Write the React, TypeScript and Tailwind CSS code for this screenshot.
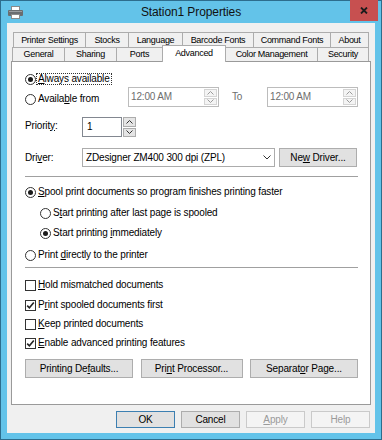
import React from "react";

const Up = ({ c = "#333" }: { c?: string }) => (
  <svg width="7" height="4" viewBox="0 0 7 4">
    <path d="M0.5 3.5 L3.5 0.5 L6.5 3.5" stroke={c} fill="none" />
  </svg>
);

const Down = ({ c = "#333" }: { c?: string }) => (
  <svg width="7" height="4" viewBox="0 0 7 4">
    <path d="M0.5 0.5 L3.5 3.5 L6.5 0.5" stroke={c} fill="none" />
  </svg>
);

function Radio({ checked }: { checked?: boolean }) {
  return (
    <span className="w-[11px] h-[11px] rounded-full border border-[#333] bg-white flex items-center justify-center shrink-0">
      {checked && <span className="w-[5px] h-[5px] rounded-full bg-[#1a1a1a]" />}
    </span>
  );
}

function Check({ checked }: { checked?: boolean }) {
  return (
    <span className="w-[11px] h-[11px] border border-[#333] bg-white flex items-center justify-center shrink-0">
      {checked && (
        <svg width="9" height="9" viewBox="0 0 9 9">
          <path d="M1.2 4.6 L3.4 6.8 L7.8 1.6" stroke="#222" strokeWidth="1.6" fill="none" />
        </svg>
      )}
    </span>
  );
}

// underlined access key
const K = ({ children }: { children: React.ReactNode }) => (
  <span className="underline underline-offset-1">{children}</span>
);

function Spinner({ disabled }: { disabled?: boolean }) {
  const half = disabled
    ? "flex-1 flex items-center justify-center border border-[#d4d4d4] bg-[#f4f4f4]"
    : "flex-1 flex items-center justify-center border border-[#acacac] bg-[#e5e5e5]";
  const c = disabled ? "#9a9a9a" : "#333";
  return (
    <div className="w-[13px] h-full flex flex-col gap-px">
      <div className={half}>
        <Up c={c} />
      </div>
      <div className={half}>
        <Down c={c} />
      </div>
    </div>
  );
}

function TimeBox() {
  return (
    <div className="w-[91px] h-[20px] border border-[#bcbcbc] bg-white flex items-center pl-[2px] p-px">
      <span className="flex-1 text-[#6d6d6d]">12:00 AM</span>
      <Spinner disabled />
    </div>
  );
}

function Btn({ children, w, def, disabled }: { children: React.ReactNode; w: string; def?: boolean; disabled?: boolean }) {
  let cls = "border-[#adadad] bg-[#e1e1e1] text-black";
  if (def) cls = "border-[#3c7fb1] bg-[#e1e1e1] text-black";
  if (disabled) cls = "border-[#cacaca] bg-[#f4f4f4] text-[#9a9a9a]";
  return <div className={`${w} h-full border flex items-center justify-center ${cls}`}>{children}</div>;
}

const row1 = [
  ["Printer Settings", 72],
  ["Stocks", 43],
  ["Language", 54],
  ["Barcode Fonts", 71],
  ["Command Fonts", 77],
  ["About", 39],
] as const;

export default function App() {
  return (
    <div className="w-[382px] h-[440px] bg-[#63c3e9] border border-[#2d6d8d] flex flex-col font-['Liberation_Sans',Arial,sans-serif] text-[10px] tracking-[-0.15px] text-black leading-none">
      {/* title bar */}
      <div className="h-[22px] shrink-0 grid grid-cols-[1fr_auto_1fr] items-center">
        <div className="pl-[7px] flex items-center">
          <svg width="15" height="13" viewBox="0 0 15 13">
            <rect x="3.5" y="0.5" width="8" height="4" fill="#fff" stroke="#8a8a8a" />
            <rect x="0" y="4" width="15" height="6" rx="1" fill="#6a6d70" />
            <rect x="1" y="5" width="13" height="1" fill="#9a9da0" />
            <rect x="3.5" y="8.5" width="8" height="4" fill="#fff" stroke="#8a8a8a" />
          </svg>
        </div>
        <div className="text-[12px] tracking-[-0.1px] text-[#111]">Station1 Properties</div>
        <div className="justify-self-end self-start -mt-px mr-[3px] w-[28px] h-[21px] bg-[#c75050] flex items-center justify-center">
          <svg width="8" height="7" viewBox="0 0 8 7">
            <path d="M1 0.5 L7 6.5 M7 0.5 L1 6.5" stroke="#1c1c1c" strokeWidth="1.8" />
          </svg>
        </div>
      </div>

      {/* client */}
      <div className="flex-1 mx-[6px] mb-[6px] bg-[#f0f0f0] pl-[4px] pt-[9px] flex flex-col">
        {/* tabs */}
        <div className="flex ml-[2px] h-[15px] text-[9px] tracking-[-0.3px]">
          {row1.map(([t, w], i) => (
            <div
              key={t}
              style={{ width: w }}
              className={`h-full border-t border-l border-[#acacac] bg-[#f0f0f0] flex items-center justify-center ${i === row1.length - 1 ? "border-r" : ""}`}
            >
              {t}
            </div>
          ))}
        </div>
        <div className="flex ml-[1px] h-[14px] items-end text-[9px] tracking-[-0.3px]">
          <div className="w-[52px] h-full border-t border-l border-[#acacac] flex items-center justify-center">General</div>
          <div className="w-[52px] h-full border-t border-l border-[#acacac] flex items-center justify-center">Sharing</div>
          <div className="w-[46px] h-full border-t border-l border-[#acacac] flex items-center justify-center">Ports</div>
          <div className="relative z-10 w-[64px] h-[17px] -mb-px border-t border-x border-[#acacac] bg-white flex justify-center pt-[3px]">
            Advanced
          </div>
          <div className="w-[91px] h-full border-t border-[#acacac] flex items-center justify-center">Color Management</div>
          <div className="w-[52px] h-full border-t border-x border-[#acacac] flex items-center justify-center">Security</div>
        </div>

        {/* panel */}
        <div className="w-[360px] h-[344px] shrink-0 border border-[#9a9a9a] bg-white pl-[13px] pr-[12px] pt-[9px] flex flex-col">
          <div className="h-[16px] flex items-center">
            <Radio checked />
            <span className="border border-dotted border-[#333] px-px h-[12px] flex items-center">
              <K>A</K>lways available
            </span>
          </div>

          <div className="h-[20px] flex items-center">
            <div className="w-[103px] mt-[4px] flex items-center gap-[2px]">
              <Radio />
              <span>
                Availa<K>b</K>le from
              </span>
            </div>
            <TimeBox />
            <span className="w-[48px] pl-[13px] text-[#6d6d6d]">To</span>
            <TimeBox />
          </div>

          <div className="h-[20px] mt-[10px] flex items-center">
            <span className="w-[57px] mt-[-3px]">
              Priorit<K>y</K>:
            </span>
            <div className="w-[40px] h-full border border-[#828790] bg-white flex items-center pl-[4px]">1</div>
            <div className="h-full ml-px">
              <Spinner />
            </div>
          </div>

          <div className="h-[19px] mt-[11px] flex items-center">
            <span className="w-[57px]">
              Dri<K>v</K>er:
            </span>
            <div className="w-[193px] h-full border border-[#acacac] bg-white flex items-center justify-between pl-[3px] pr-[3px]">
              <span>ZDesigner ZM400 300 dpi (ZPL)</span>
              <svg width="8" height="5" viewBox="0 0 8 5">
                <path d="M0.5 0.5 L4 4 L7.5 0.5" stroke="#333" fill="none" />
              </svg>
            </div>
            <div className="ml-[4px] h-full flex">
              <Btn w="w-[78px]">
                Ne<K>w</K>&nbsp;Driver...
              </Btn>
            </div>
          </div>

          <div className="h-px mt-[9px] bg-[#a0a0a0]" />

          <div className="h-[16px] mt-[7px] flex items-center gap-[2px]">
            <Radio checked />
            <span>
              <K>S</K>pool print documents so program finishes printing faster
            </span>
          </div>
          <div className="h-[16px] mt-[5px] pl-[15px] flex items-center gap-[2px]">
            <Radio />
            <span>
              S<K>t</K>art printing after last page is spooled
            </span>
          </div>
          <div className="h-[16px] mt-[4px] pl-[15px] flex items-center gap-[2px]">
            <Radio checked />
            <span>
              Start printing <K>i</K>mmediately
            </span>
          </div>
          <div className="h-[16px] mt-[6px] flex items-center gap-[2px]">
            <Radio />
            <span>
              Print <K>d</K>irectly to the printer
            </span>
          </div>

          <div className="h-px mt-[4px] bg-[#a0a0a0]" />

          <div className="h-[16px] mt-[9px] flex items-center gap-[2px]">
            <Check />
            <span>
              <K>H</K>old mismatched documents
            </span>
          </div>
          <div className="h-[16px] mt-[4px] flex items-center gap-[2px]">
            <Check checked />
            <span>
              P<K>r</K>int spooled documents first
            </span>
          </div>
          <div className="h-[16px] mt-[3px] flex items-center gap-[2px]">
            <Check />
            <span>
              <K>K</K>eep printed documents
            </span>
          </div>
          <div className="h-[16px] mt-[3px] flex items-center gap-[2px]">
            <Check checked />
            <span>
              <K>E</K>nable advanced printing features
            </span>
          </div>

          <div className="h-[19px] mt-[8px] flex justify-between">
            <Btn w="w-[108px]">
              Printing De<K>f</K>aults...
            </Btn>
            <Btn w="w-[102px]">
              Pri<K>n</K>t Processor...
            </Btn>
            <Btn w="w-[108px]">
              Separat<K>o</K>r Page...
            </Btn>
          </div>
        </div>

        {/* dialog buttons */}
        <div className="h-[17px] mt-[6px] pr-[5px] flex justify-end gap-[6px]">
          <Btn w="w-[59px]" def>
            OK
          </Btn>
          <Btn w="w-[59px]">Cancel</Btn>
          <Btn w="w-[59px]" disabled>
            <K>A</K>pply
          </Btn>
          <Btn w="w-[59px]" disabled>
            Help
          </Btn>
        </div>
      </div>
    </div>
  );
}
